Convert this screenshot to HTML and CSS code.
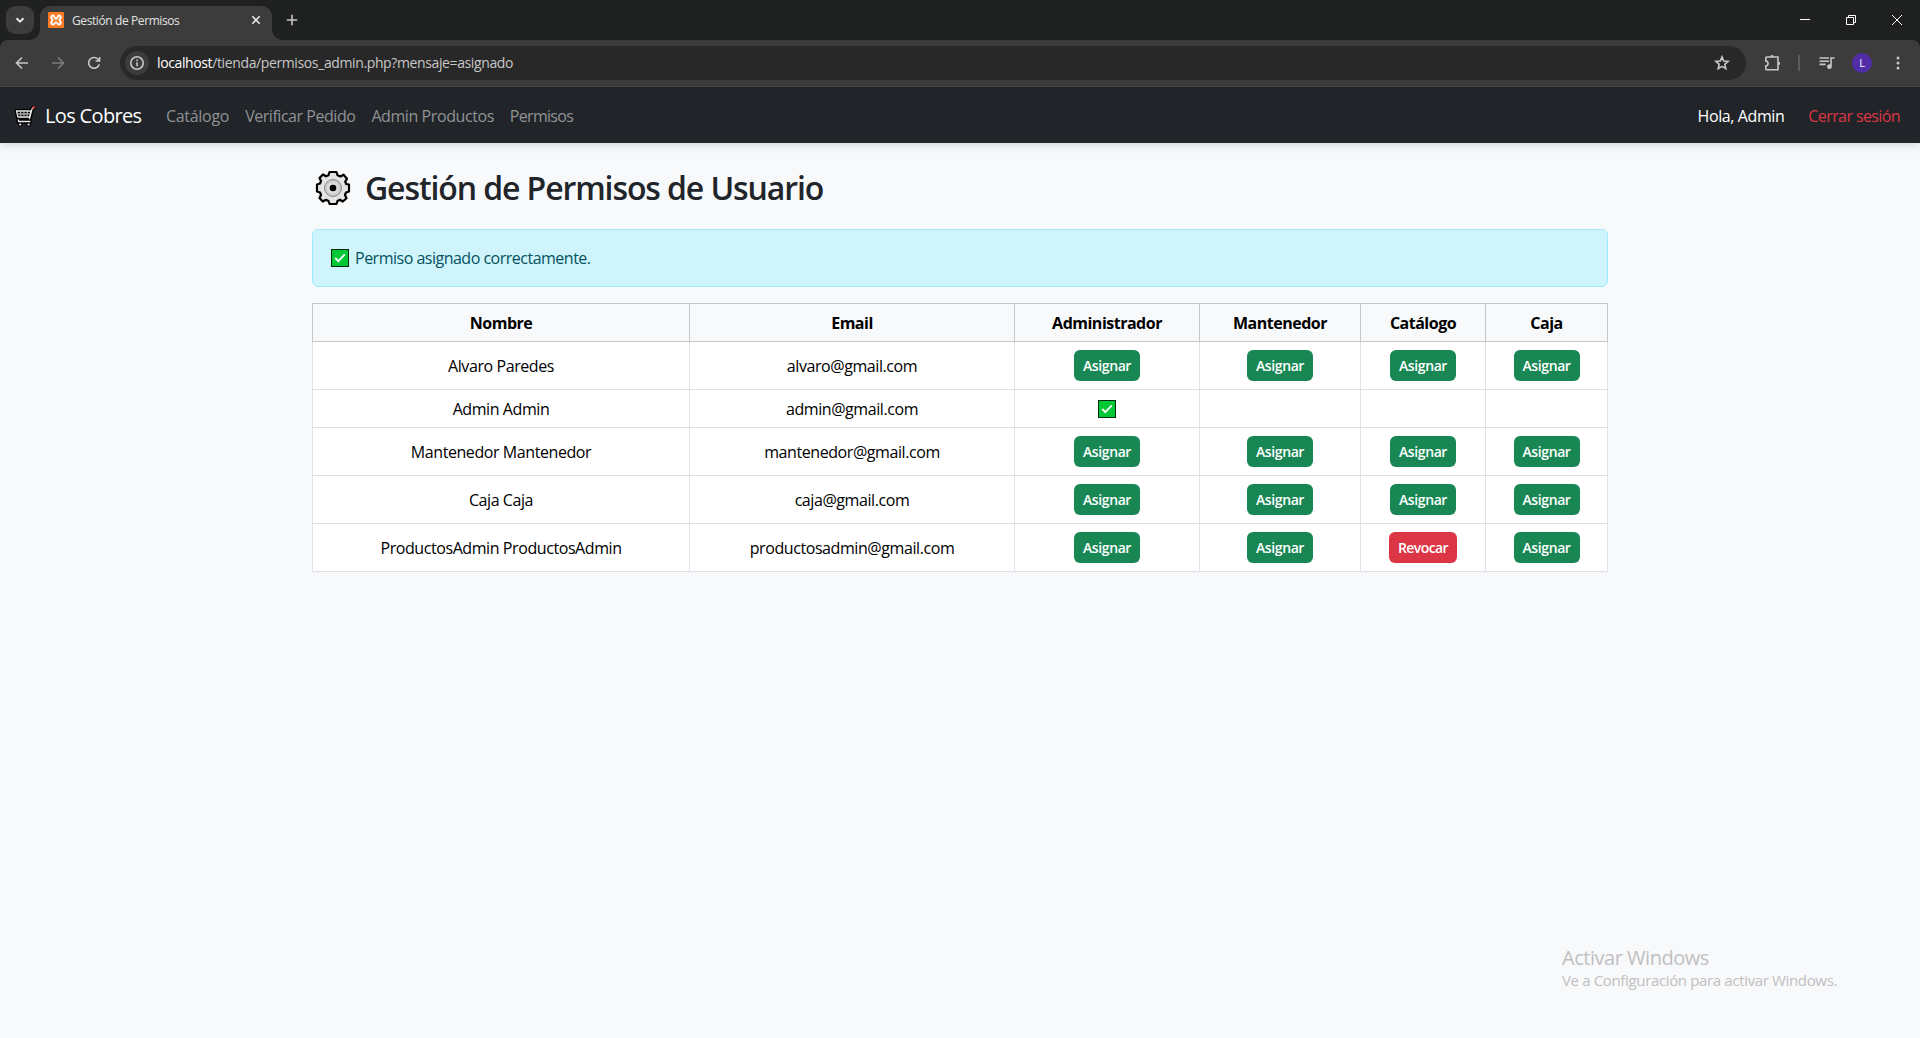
FILE: index.html
```html
<!DOCTYPE html>
<html lang="es">
<head>
<meta charset="utf-8">
<title>Gestión de Permisos</title>
<link rel="stylesheet" href="styles.css">
</head>
<body>
<div class="browser">
  <div class="tabstrip">
    <span class="tab-search"><svg width="12" height="12" viewBox="0 0 12 12"><path d="M2.5 4.2 6 7.7 9.5 4.2"/></svg></span>
    <div class="tab">
      <svg class="favicon" width="16" height="16" viewBox="0 0 16 16"><rect width="16" height="16" rx="1" fill="#fb7a24"/><path d="M5.200 3.500C3.200 3.500 2.600 5.200 3.800 6.600L4.600 8 3.800 9.400C2.600 10.800 3.200 12.500 5.200 12.500 6.800 12.500 6.800 10.400 8 10.400S9.200 12.500 10.800 12.500C12.800 12.500 13.400 10.800 12.200 9.400L11.400 8 12.200 6.600C13.400 5.200 12.800 3.500 10.800 3.500 9.300 3.500 9.600 7 8 7S6.700 3.500 5.200 3.500Z" fill="none" stroke="#fff" stroke-width="1.900"/></svg>
      <span class="tab-title">Gestión de Permisos</span>
      <svg class="tab-close" width="10" height="10" viewBox="0 0 10 10"><path d="M1.300 1.300 8.700 8.700M8.700 1.300 1.300 8.700"/></svg>
    </div>
    <svg class="new-tab" width="12" height="12" viewBox="0 0 12 12"><path d="M6 .800V11.200M.800 6H11.200"/></svg>
    <div class="window-controls">
      <svg width="10" height="12" viewBox="0 0 10 12"><path d="M0 5.500H10"/></svg>
      <svg width="12" height="12" viewBox="0 0 12 12"><path d="M1.500 3.500h7v7h-7zM3.500 3.500v-2h7v7h-2"/></svg>
      <svg width="12" height="12" viewBox="0 0 12 12"><path d="M1 1 11 11M11 1 1 11"/></svg>
    </div>
  </div>
  <div class="toolbar">
    <svg width="16" height="16" viewBox="0 0 16 16"><path d="M14 8H3M8 2.500 2.500 8 8 13.500"/></svg>
    <svg class="disabled" width="16" height="16" viewBox="0 0 16 16"><path d="M2 8H13M8 2.500 13.500 8 8 13.500"/></svg>
    <svg width="16" height="16" viewBox="0 0 16 16"><path d="M13.300 9.200A5.400 5.400 0 1 1 12 4.200L13.500 5.700M13.600 2V6H9.500"/></svg>
    <div class="address">
      <span class="site-info"><svg width="16" height="16" viewBox="0 0 16 16"><circle cx="8" cy="8" r="6.200"/><path d="M8 7.200V11.300M8 4.500V6"/></svg></span>
      <span class="url"><b>localhost</b>/tienda/permisos_admin.php?mensaje=asignado</span>
      <svg class="star" width="16" height="16" viewBox="0 0 16 16"><path d="M8 1.900 9.700 6 14.100 6.400 10.800 9.300 11.800 13.700 8 11.400 4.200 13.700 5.200 9.300 1.900 6.400 6.300 6Z"/></svg>
    </div>
    <svg class="puzzle" width="18" height="18" viewBox="0 0 18 18"><path d="M2.700 3H14V15.800H2.700Q1.800 15.800 1.800 15V12C4.800 11.700 4.800 7.300 1.800 7V4Q1.800 3 2.700 3Z"/><path class="knob" d="M6.200 2.800A1.900 1.900 0 0 1 10 2.800ZM14.300 7.400A1.900 1.900 0 0 1 14.300 11.200Z"/></svg>
    <span class="divider"></span>
    <svg class="media" width="16" height="14" viewBox="0 0 16 14"><path d="M.500 2H10M.500 5.200H10M.500 8.400H6.500M12 10.500V2H15.500"/><circle cx="10.400" cy="10.700" r="1.600"/></svg>
    <span class="avatar">L</span>
    <svg class="more" width="4" height="16" viewBox="0 0 4 16"><circle cx="2" cy="3" r="1.500"/><circle cx="2" cy="8" r="1.500"/><circle cx="2" cy="13" r="1.500"/></svg>
  </div>
</div>
<nav class="navbar">
  <a class="brand">
    <svg width="22" height="22" viewBox="0 0 22 22"><g fill="none" stroke-linejoin="round" stroke-linecap="round"><path d="M20 2.500 18 4 15.500 14.500H4.500M2.500 6H17L15.500 12H4ZM4.500 14.500V17H16M6 19.500h.5M14.500 19.500h.5" stroke="#000" stroke-width="4"/><path d="M19.500 2.500 18 4 15.500 13.500M2.500 6H17L15.500 12H4ZM4.500 15V16.500H16" stroke="#e8e8e8" stroke-width="1.300"/><path d="M3.500 9H16M6.500 6 7 12M10 6V12M13.500 6 12.800 12" stroke="#c8c8c8"/><path d="M6 19.500h.3M14.500 19.500h.3" stroke="#ddd" stroke-width="2"/><path d="M19 3 20.200 2.200" stroke="#f05050" stroke-width="2"/></g></svg>
    <span>Los Cobres</span>
  </a>
  <ul class="links">
    <li class="l1">Catálogo</li><li class="l2">Verificar Pedido</li><li class="l3">Admin Productos</li><li class="l4">Permisos</li>
  </ul>
  <span class="hello">Hola, Admin</span>
  <a class="logout">Cerrar sesión</a>
</nav>
<main class="container">
  <h1>
    <svg width="36" height="36" viewBox="0 0 36 36"><path d="M13.500 5.300 14.500 2H21.500L22.500 5.300 25.500 6.500 28.600 4.700 32 8.800 30.200 11.500 31.200 14 34 14.500V21.500L31 22.500 30 25 31.500 28.200 27.800 31.500 25 29.800 22.500 31 21.500 34H14.500L13.500 31 11 29.800 7.800 31.500 4.500 28 6 25 5 22.500 2 21.500V14.500L5 13.500 6 11 4.500 8 8 4.500 11 6.300Z" fill="#e4e4e4" stroke="#000" stroke-width="2.200" stroke-linejoin="round"/><circle cx="18" cy="18" r="8.500" fill="#ccc" stroke="#888"/><circle cx="18" cy="18" r="6" fill="#dcdcdc"/><circle cx="18" cy="18" r="3.300"/></svg>
    <span>Gestión de Permisos de Usuario</span>
  </h1>
  <div class="alert">
    <svg class="check" width="18" height="18" viewBox="0 0 18 18"><rect x=".500" y=".500" width="17" height="17" fill="#00c734" stroke="#032b10"/><path d="M4.200 9 7.300 12.200 13.800 5.300"/></svg>
    <span>Permiso asignado correctamente.</span>
  </div>
  <table>
    <colgroup><col class="c1"><col class="c2"><col class="c3"><col class="c4"><col class="c5"><col class="c6"></colgroup>
    <thead><tr><th>Nombre</th><th>Email</th><th>Administrador</th><th>Mantenedor</th><th>Catálogo</th><th>Caja</th></tr></thead>
    <tbody>
      <tr><td>Alvaro Paredes</td><td>alvaro@gmail.com</td><td><button>Asignar</button></td><td><button>Asignar</button></td><td><button>Asignar</button></td><td><button>Asignar</button></td></tr>
      <tr class="short"><td>Admin Admin</td><td>admin@gmail.com</td><td><svg class="check" width="18" height="18" viewBox="0 0 18 18"><rect x=".500" y=".500" width="17" height="17" fill="#00c734" stroke="#032b10"/><path d="M4.200 9 7.300 12.200 13.800 5.300"/></svg></td><td></td><td></td><td></td></tr>
      <tr><td>Mantenedor Mantenedor</td><td>mantenedor@gmail.com</td><td><button>Asignar</button></td><td><button>Asignar</button></td><td><button>Asignar</button></td><td><button>Asignar</button></td></tr>
      <tr><td>Caja Caja</td><td>caja@gmail.com</td><td><button>Asignar</button></td><td><button>Asignar</button></td><td><button>Asignar</button></td><td><button>Asignar</button></td></tr>
      <tr><td>ProductosAdmin ProductosAdmin</td><td>productosadmin@gmail.com</td><td><button>Asignar</button></td><td><button>Asignar</button></td><td><button class="revoke">Revocar</button></td><td><button>Asignar</button></td></tr>
    </tbody>
  </table>
</main>
<aside class="watermark">
  <p class="wm-title">Activar Windows</p>
  <p class="wm-text">Ve a Configuración para activar Windows.</p>
</aside>
</body>
</html>
```
FILE: styles.css
```css
* { box-sizing: border-box; }
body {
  margin: 0;
  height: 1038px;
  overflow: hidden;
  background: #f8f9fa;
  color: #212529;
  font: 16px/24px "Open Sans", "Noto Sans", sans-serif;
  letter-spacing: -0.42px;
}
svg { display: block; flex: none; }
.browser { background: #1f2120; }
.browser svg { fill: none; stroke: #c7c7c7; stroke-width: 1.6; }
.tabstrip { display: flex; height: 40px; }
.tab-search {
  display: grid; place-items: center;
  width: 28px; height: 28px; margin: 6px 6px 0;
  border-radius: 9px; background: #3c3c3c;
}
.tab-search svg { stroke: #e3e3e3; stroke-width: 2; }
.tab {
  position: relative;
  display: flex; align-items: center;
  width: 232px; height: 34px; margin-top: 6px; padding: 0 11px 6px 8px;
  border-radius: 10px 10px 0 0; background: #3c3c3c;
}
.tab::before, .tab::after {
  content: ""; position: absolute; bottom: 0; width: 10px; height: 10px;
}
.tab::before { left: -10px; background: radial-gradient(circle at 0 0, transparent 9.5px, #3c3c3c 10px); }
.tab::after { right: -10px; background: radial-gradient(circle at 100% 0, transparent 9.5px, #3c3c3c 10px); }
.browser .favicon { stroke: none; }
.tab-title { flex: 1; margin-left: 8px; padding-top: 1px; color: #e3e3e3; font-size: 12px; line-height: 16px; letter-spacing: -0.4px; }
.browser .tab-close { stroke: #e3e3e3; }
.new-tab { margin: 14px 0 0 14px; }
.window-controls { display: flex; gap: 35px; margin: 14px 17px 0 auto; }
.window-controls svg:nth-child(-n+2) { margin-right: -1px; margin-left: 1px; }
.browser .window-controls svg { stroke: #fff; stroke-width: 1; }
.toolbar {
  display: flex; align-items: center;
  height: 47px; padding: 0 20px 1px 14px;
  background: #3c3c3c; border-bottom: 1px solid #4a4a4a;
  border-radius: 8px 8px 0 0;
}
.toolbar > svg:nth-child(-n+2) { margin-right: 20px; }
.browser .disabled { stroke: #7c7c7c; }
.address {
  display: flex; align-items: center; flex: 1;
  height: 34px; margin-left: 18px; padding: 0 16px 0 5px;
  border-radius: 17px; background: #282828;
}
.site-info { display: grid; place-items: center; width: 24px; height: 24px; border-radius: 50%; background: #3c3c3c; }
.url { flex: 1; margin-left: 8px; color: #c7c7c7; font-size: 14px; letter-spacing: -0.38px; }
.url b { color: #fff; font-weight: 400; }
.puzzle { margin-left: 18px; }
.browser .knob { fill: #c7c7c7; stroke: none; }
.divider { width: 2px; height: 16px; margin: 0 19px 0 16px; background: #5c5c5c; }
.browser .media circle, .browser .more { fill: #c7c7c7; }
.browser .more { stroke: none; margin-left: 24px; }
.avatar {
  width: 20px; height: 20px; margin-left: 17px;
  border-radius: 50%; background: #512da8; color: #fff;
  font-size: 11px; line-height: 20px; text-align: center;
}
.navbar {
  display: flex; align-items: center;
  height: 56px; padding: 1px 20px 0 14px;
  background: #212529; color: #fff;
  box-shadow: 0 2px 8px rgba(0, 0, 0, .15);
}
.brand { display: flex; align-items: center; width: 152px; gap: 9px; font-size: 20px; letter-spacing: -0.65px; }
.links { display: flex; gap: 16px; margin: 0; padding: 0; list-style: none; color: #909294; }
.l1 { letter-spacing: -0.3px; }
.l2 { letter-spacing: -0.46px; }
.l4 { letter-spacing: -0.7px; }
.hello { margin-left: auto; letter-spacing: -0.4px; }
.logout { margin-left: 24px; color: #dc3545; letter-spacing: -0.6px; }
.container { width: 1296px; margin: 24px auto 0; }
h1 {
  display: flex; align-items: center; gap: 14px;
  height: 38px; margin: 0 0 24px; padding: 3px 0 0 3px;
  font-size: 32px; line-height: 38px; font-weight: 600; letter-spacing: -1.1px;
}
.alert {
  display: flex; align-items: center; gap: 6px;
  height: 58px; margin-bottom: 16px; padding: 0 17px 0 18px;
  border: 1px solid #9eeaf9; border-radius: 6px;
  background: #cff4fc; color: #055160; letter-spacing: -0.5px;
}
.check path { fill: none; stroke: #fff; stroke-width: 1.8; }
table { width: 1296px; table-layout: fixed; border-collapse: collapse; background: #fff; color: #000; text-align: center; }
.c1 { width: 377px; } .c2 { width: 325px; } .c3 { width: 185px; }
.c4 { width: 161px; } .c5 { width: 125px; }
th, td { padding: 1px 0 0; border: 1px solid #dee2e6; vertical-align: middle; }
th { height: 38px; border-color: #c6c7c8; background: #f8f9fa; font-weight: 700; letter-spacing: -0.5px; }
td { height: 48px; }
td:nth-child(n+3) { padding: 0; }
.short td { height: 38px; }
td .check { margin: 0 auto; }
button {
  display: block; height: 31px; margin: 0 auto; padding: 0 9px;
  border: 0; border-radius: 6px; background: #198754; color: #fff;
  font: 600 14px/32px "Open Sans", sans-serif; letter-spacing: -0.4px;
}
.revoke { background: #dc3545; letter-spacing: -0.6px; }
.watermark { position: absolute; left: 1562px; top: 944px; color: #bfc0c1; }
.watermark p { margin: 0; }
.wm-title { font-size: 20px; line-height: 27px; letter-spacing: -0.47px; }
.wm-text { font-size: 15px; line-height: 18px; letter-spacing: -0.35px; }
```
